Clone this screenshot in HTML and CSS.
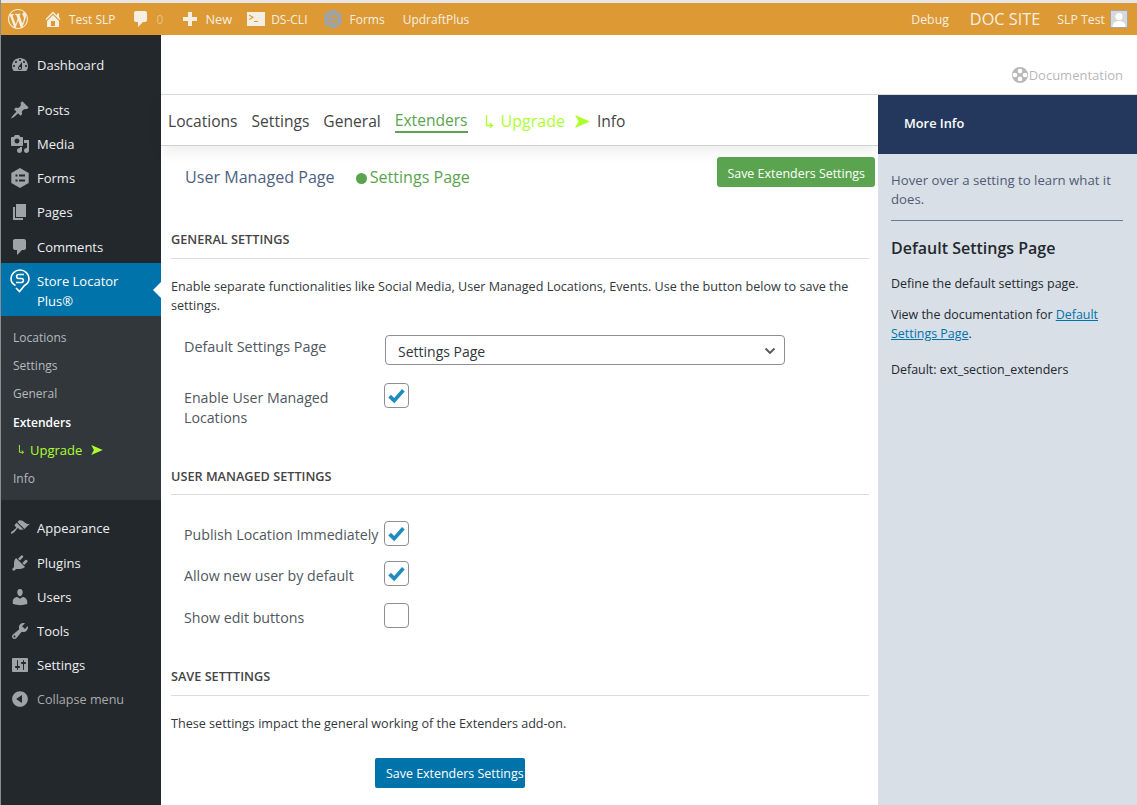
FILE: index.html
```html
<!DOCTYPE html>
<html lang="en">

<head>
  <meta charset="UTF-8">
  <meta name="viewport" content="width=device-width, initial-scale=1.0">
  <title>Extenders - Store Locator Plus</title>
  <link rel="stylesheet" href="styles.css">
</head>

<body>
  <svg class="sprite" width="0" height="0">
    <symbol id="i-wp" viewBox="0 0 20 20"><path d="M20 10c0-5.51-4.49-10-10-10C4.48 0 0 4.49 0 10c0 5.52 4.48 10 10 10 5.51 0 10-4.48 10-10zM7.78 15.37L4.37 6.22c.55-.02 1.17-.08 1.17-.08.5-.06.44-1.13-.06-1.11 0 0-1.45.11-2.37.11-.18 0-.37 0-.58-.01C4.12 2.69 6.87 1.11 10 1.11c2.33 0 4.45.87 6.05 2.34-.68-.11-1.65.39-1.65 1.58 0 .74.45 1.36.9 2.1.35.61.55 1.36.55 2.46 0 1.49-1.4 5-1.4 5l-3.03-8.37c.54-.02.82-.17.82-.17.5-.05.44-1.25-.06-1.22 0 0-1.44.12-2.38.12-.87 0-2.33-.12-2.33-.12-.5-.03-.56 1.2-.06 1.22l.92.08 1.26 3.41zM17.41 10c.24-.64.74-1.87.43-4.25.7 1.29 1.05 2.71 1.05 4.25 0 3.29-1.73 6.24-4.4 7.78.97-2.59 1.94-5.2 2.92-7.78zM6.1 18.09C3.12 16.65 1.11 13.53 1.11 10c0-1.3.23-2.48.72-3.59C3.25 10.3 4.67 14.2 6.1 18.09zm4.03-6.63l2.58 6.98c-.86.29-1.76.45-2.71.45-.79 0-1.57-.11-2.29-.33.81-2.38 1.62-4.74 2.42-7.1z"/></symbol>
    <symbol id="i-home" viewBox="0 0 20 20"><path d="M16 8.5l1.53 1.53-1.06 1.06L10 4.62l-6.47 6.47-1.06-1.06L10 2.5l4 4v-2h2v4zm-6-2.46l6 5.99V18H4v-5.97zM12 17v-5H8v5h4z"/></symbol>
    <symbol id="i-comment" viewBox="0 0 20 20"><path d="M5 2h9c1.1 0 2 .9 2 2v7c0 1.1-.9 2-2 2h-2l-5 5v-5H5c-1.1 0-2-.9-2-2V4c0-1.1.9-2 2-2z"/></symbol>
    <symbol id="i-plus" viewBox="0 0 20 20"><path d="M17 8v4h-5v5H8v-5H3V8h5V3h4v5h5z"/></symbol>
    <symbol id="i-term" viewBox="0 0 18 14"><path fill-rule="evenodd" d="M0 0h18v14H0zM2 2.5v1.2l3 1.6-3 1.6v1.2l4.600-2.400v-.8zM7 9v1h4V9z"/></symbol>
    <symbol id="i-forms" viewBox="0 0 20 20"><path fill-rule="evenodd" d="M10 0l8.700 5v10L10 20l-8.700-5V5zM5.500 6.500v2h2v-2zM9 6.500v2h6v-2zM5.500 11.500v2h2v-2zM9 11.500v2h6v-2z"/></symbol>
    <symbol id="i-dash" viewBox="0 0 20 20"><path d="M3.76 16h12.48c1.1-1.37 1.76-3.11 1.76-5 0-4.42-3.58-8-8-8s-8 3.58-8 8c0 1.89.66 3.63 1.76 5zM10 4c.55 0 1 .45 1 1s-.45 1-1 1-1-.45-1-1 .45-1 1-1zM6 6c.55 0 1 .45 1 1s-.45 1-1 1-1-.45-1-1 .45-1 1-1zm8 0c.55 0 1 .45 1 1s-.45 1-1 1-1-.45-1-1 .45-1 1-1zm-5.37 5.55L12 7v6c0 1.1-.9 2-2 2s-2-.9-2-2c0-.57.24-1.08.63-1.45zM4 10c.55 0 1 .45 1 1s-.45 1-1 1-1-.45-1-1 .45-1 1-1zm12 0c.55 0 1 .45 1 1s-.45 1-1 1-1-.45-1-1 .45-1 1-1zm-5 3c0-.55-.45-1-1-1s-1 .45-1 1 .45 1 1 1 1-.45 1-1z"/></symbol>
    <symbol id="i-pin" viewBox="0 0 20 20"><path d="M10.44 3.02l1.82-1.82 6.36 6.35-1.83 1.82c-1.05-.68-2.48-.57-3.41.36l-.75.75c-.92.93-1.04 2.35-.35 3.41l-1.83 1.82-2.41-2.41-2.8 2.79c-.42.42-3.38 2.71-3.8 2.29s1.86-3.39 2.28-3.81l2.79-2.79L4.1 9.36l1.83-1.82c1.05.69 2.48.57 3.4-.36l.75-.75c.93-.92 1.05-2.35.36-3.41z"/></symbol>
    <symbol id="i-media" viewBox="0 0 20 20"><path d="M13 11V4c0-.55-.45-1-1-1h-1.67L9 1H5L3.67 3H2c-.55 0-1 .45-1 1v7c0 .55.45 1 1 1h10c.55 0 1-.45 1-1zM7 4.5c1.38 0 2.5 1.12 2.5 2.5S8.38 9.5 7 9.5 4.5 8.38 4.5 7 5.62 4.5 7 4.5zM14 6h5v10.5c0 1.38-1.12 2.5-2.5 2.5S14 17.88 14 16.5s1.12-2.5 2.5-2.5c.17 0 .34.02.5.05V9h-3V6zm-4 8.05V13h2v3.5c0 1.38-1.12 2.5-2.5 2.5S7 17.88 7 16.5 8.12 14 9.5 14c.17 0 .34.02.5.05z"/></symbol>
    <symbol id="i-pages" viewBox="0 0 20 20"><path d="M6 15V2h10v13H6zm-1 1h8v2H3V5h2v11z"/></symbol>
    <symbol id="i-brush" viewBox="0 0 20 20"><path d="M14.48 11.06L7.41 3.99l1.5-1.5c.5-.56 2.3-.47 3.51.32 1.21.8 1.43 1.28 2.91 2.1 1.18.64 2.45 1.26 4.45.85zm-.71.71L6.7 4.7 4.93 6.47c-.39.39-.39 1.02 0 1.41l1.06 1.06c.39.39.39 1.03 0 1.42-.6.6-1.43 1.11-2.21 1.69-.35.26-.7.53-1.01.84C1.43 13.23.4 14.85 1.05 15.5c.65.65 2.27-.38 3.62-1.72.31-.31.58-.66.84-1.01.58-.78 1.09-1.61 1.69-2.21.39-.39 1.02-.39 1.41 0l1.06 1.06c.39.39 1.02.39 1.41 0z"/></symbol>
    <symbol id="i-plug" viewBox="0 0 20 20"><path d="M13.11 4.36L9.87 7.6 8 5.73l3.24-3.24c.35-.34 1.05-.2 1.56.32.52.51.66 1.21.31 1.55zm-8 1.77l.91-1.12 9.01 9.01-1.19.84c-.71.71-2.63 1.16-3.82 1.16H6.14L4.9 17.26c-.59.59-1.54.59-2.12 0-.59-.58-.59-1.53 0-2.12l1.24-1.24v-3.88c0-1.13.4-3.19 1.09-3.89zm7.26 3.97l3.24-3.24c.34-.35 1.04-.21 1.55.31.52.51.66 1.21.31 1.55l-3.24 3.25z"/></symbol>
    <symbol id="i-users" viewBox="0 0 20 20"><path d="M10 9.25c-2.27 0-2.73-3.44-2.73-3.44C7 4.02 7.82 2 9.97 2c2.16 0 2.98 2.02 2.71 3.81 0 0-.41 3.44-2.68 3.44zm0 2.57L12.72 10c2.39 0 4.52 2.33 4.52 4.53v2.49s-3.65 1.13-7.24 1.13c-3.65 0-7.24-1.13-7.24-1.13v-2.49c0-2.25 1.94-4.48 4.47-4.48z"/></symbol>
    <symbol id="i-tools" viewBox="0 0 20 20"><path d="M16.68 9.77c-1.34 1.34-3.3 1.67-4.95.99l-5.41 6.52c-.99.99-2.59.99-3.58 0s-.99-2.59 0-3.57l6.52-5.42c-.68-1.65-.35-3.61.99-4.95 1.28-1.28 3.12-1.62 4.72-1.06l-2.89 2.89 2.82 2.82 2.86-2.87c.53 1.58.18 3.39-1.08 4.65zM3.81 16.21c.4.39 1.04.39 1.43 0 .4-.4.4-1.04 0-1.43-.39-.4-1.03-.4-1.43 0-.39.39-.39 1.03 0 1.43z"/></symbol>
    <symbol id="i-sliders" viewBox="0 0 20 20"><path d="M18 16V4c0-.55-.45-1-1-1H3c-.55 0-1 .45-1 1v12c0 .55.45 1 1 1h14c.55 0 1-.45 1-1zM8 11h1c.55 0 1 .45 1 1s-.45 1-1 1H8v1.5c0 .28-.22.5-.5.5s-.5-.22-.5-.5V13H6c-.55 0-1-.45-1-1s.45-1 1-1h1V5.5c0-.28.22-.5.5-.5s.5.22.5.5V11zm5-2h-1c-.55 0-1-.45-1-1s.45-1 1-1h1V5.5c0-.28.22-.5.5-.5s.5.22.5.5V7h1c.55 0 1 .45 1 1s-.45 1-1 1h-1v5.5c0 .28-.22.5-.5.5s-.5-.22-.5-.5V9z"/></symbol>
    <symbol id="i-collapse" viewBox="0 0 20 20"><path d="M10 2.16c4.33 0 7.84 3.51 7.84 7.84s-3.51 7.84-7.84 7.84S2.16 14.33 2.16 10 5.71 2.16 10 2.16zm2 11.72V6.12L6.18 9.97z"/></symbol>
    <symbol id="i-buoy" viewBox="0 0 20 20"><path fill-rule="evenodd" d="M10 1a9 9 0 1 1 0 18 9 9 0 0 1 0-18zM10 3a2.600 2.600 0 1 0 0 5.200A2.600 2.600 0 0 0 10 3zM4.400 7.400a2.600 2.600 0 1 0 0 5.200 2.600 2.600 0 0 0 0-5.200zM15.600 7.400a2.600 2.600 0 1 0 0 5.200 2.600 2.600 0 0 0 0-5.200zM10 11.800a2.600 2.600 0 1 0 0 5.200 2.600 2.600 0 0 0 0-5.200z"/></symbol>
    <symbol id="i-send" viewBox="0 0 15 13"><path d="M0 0l15 6.500L0 13l3.500-6.500z"/></symbol>
    <symbol id="i-turn" viewBox="0 0 9 13"><path d="M1.500 0v10.500H7M4.800 8l2.700 2.500-2.700 2.500" fill="none" stroke="currentColor" stroke-width="1.300"/></symbol>
    <symbol id="i-tick" viewBox="0 0 20 20"><path d="M4 10.500l4 4 8-9" fill="none" stroke="#1e8cbe" stroke-width="3.200"/></symbol>
  </svg>

  <div class="adminbar">
    <div class="bar-left">
      <span class="bar-item bar-logo"><svg class="bar-icon"><use href="#i-wp"/></svg></span>
      <span class="bar-item"><svg class="bar-icon"><use href="#i-home"/></svg>Test SLP</span>
      <span class="bar-item bar-comments"><svg class="bar-icon"><use href="#i-comment"/></svg><span class="bar-zero">0</span></span>
      <span class="bar-item bar-new"><svg class="bar-icon"><use href="#i-plus"/></svg>New</span>
      <span class="bar-item"><svg class="bar-icon term"><use href="#i-term"/></svg>DS-CLI</span>
      <span class="bar-item bar-forms"><svg class="bar-icon forms"><use href="#i-forms"/></svg>Forms</span>
      <span class="bar-item bar-updraft">UpdraftPlus</span>
    </div>
    <div class="bar-right">
      <span class="bar-item">Debug</span>
      <span class="bar-item doc-site">DOC SITE</span>
      <span class="bar-item bar-user">SLP Test<span class="avatar"><svg viewBox="0 0 16 16"><circle cx="8" cy="5.500" r="3.500"/><path d="M1.500 16c0-4 3-6 6.500-6s6.500 2 6.500 6z"/></svg></span></span>
    </div>
  </div>

  <div class="wrap">
    <nav class="sidebar">
      <ul class="menu first">
        <li><svg class="menu-icon"><use href="#i-dash"/></svg>Dashboard</li>
      </ul>
      <ul class="menu second">
        <li><svg class="menu-icon"><use href="#i-pin"/></svg>Posts</li>
        <li><svg class="menu-icon"><use href="#i-media"/></svg>Media</li>
        <li><svg class="menu-icon"><use href="#i-forms"/></svg>Forms</li>
        <li><svg class="menu-icon"><use href="#i-pages"/></svg>Pages</li>
        <li><svg class="menu-icon"><use href="#i-comment"/></svg>Comments</li>
        <li class="current">
          <svg class="menu-icon slp-logo" viewBox="0 0 20 24"><path d="M5.500 16.500C2.500 15 1 12.500 1 9.800 1 5 5 1 10 1s9 4 9 8.800c0 2.700-1.500 5.200-4.500 6.700l-5 6-3.500-3.500" fill="none" stroke="#fff" stroke-width="1.600"/><path d="M14 5.500H8.500C6 5.500 6 9.500 8.500 9.500h3c2.500 0 2.500 4 0 4H6" fill="none" stroke="#fff" stroke-width="1.600"/></svg>
          <span>Store Locator<br>Plus®</span>
        </li>
      </ul>
      <ul class="submenu">
        <li>Locations</li>
        <li>Settings</li>
        <li>General</li>
        <li class="sub-active">Extenders</li>
        <li class="sub-upgrade"><svg class="sub-turn"><use href="#i-turn"/></svg>Upgrade<svg class="sub-send"><use href="#i-send"/></svg></li>
        <li>Info</li>
      </ul>
      <ul class="menu third">
        <li><svg class="menu-icon"><use href="#i-brush"/></svg>Appearance</li>
        <li><svg class="menu-icon"><use href="#i-plug"/></svg>Plugins</li>
        <li><svg class="menu-icon"><use href="#i-users"/></svg>Users</li>
        <li><svg class="menu-icon"><use href="#i-tools"/></svg>Tools</li>
        <li><svg class="menu-icon"><use href="#i-sliders"/></svg>Settings</li>
        <li class="collapse"><svg class="menu-icon"><use href="#i-collapse"/></svg>Collapse menu</li>
      </ul>
    </nav>

    <div class="page">
      <div class="page-head">
        <span class="doc-link"><svg class="doc-icon"><use href="#i-buoy"/></svg>Documentation</span>
      </div>
      <div class="page-body">
        <main class="content">
          <div class="tabs">
            <span class="tab">Locations</span>
            <span class="tab">Settings</span>
            <span class="tab">General</span>
            <span class="tab tab-active">Extenders</span>
            <svg class="tab-turn"><use href="#i-turn"/></svg>
            <span class="tab tab-upgrade">Upgrade</span>
            <svg class="tab-send"><use href="#i-send"/></svg>
            <span class="tab">Info</span>
          </div>

          <div class="subhead">
            <div class="subtabs">
              <span class="subtab">User Managed Page</span>
              <span class="subtab subtab-on"><span class="dot"></span>Settings Page</span>
            </div>
            <button class="btn btn-green">Save Extenders Settings</button>
          </div>

          <section class="group group-general">
            <h3>GENERAL SETTINGS</h3>
            <p class="intro">Enable separate functionalities like Social Media, User Managed Locations, Events. Use the button below to save the settings.</p>
            <div class="row row-select">
              <label>Default Settings Page</label>
              <div class="select"><span>Settings Page</span>
                <svg viewBox="0 0 12 8"><path d="M1.500 1.500L6 6l4.500-4.500" fill="none" stroke="#50575e" stroke-width="1.800"/></svg>
              </div>
            </div>
            <div class="row row-two">
              <label>Enable User Managed Locations</label>
              <span class="check"><svg><use href="#i-tick"/></svg></span>
            </div>
          </section>

          <section class="group group-user">
            <h3>USER MANAGED SETTINGS</h3>
            <div class="row row-one">
              <label>Publish Location Immediately</label>
              <span class="check"><svg><use href="#i-tick"/></svg></span>
            </div>
            <div class="row row-mid">
              <label>Allow new user by default</label>
              <span class="check"><svg><use href="#i-tick"/></svg></span>
            </div>
            <div class="row row-last">
              <label>Show edit buttons</label>
              <span class="check"></span>
            </div>
          </section>

          <section class="group group-save">
            <h3>SAVE SETTTINGS</h3>
            <p class="intro">These settings impact the general working of the Extenders add-on.</p>
            <div class="save-row"><button class="btn btn-blue">Save Extenders Settings</button></div>
          </section>
        </main>

        <aside class="info">
          <div class="info-head">More Info</div>
          <div class="info-body">
            <p class="hover-note">Hover over a setting to learn what it does.</p>
            <h2>Default Settings Page</h2>
            <p>Define the default settings page.</p>
            <p>View the documentation for <a href="#">Default Settings Page</a>.</p>
            <p class="default-val">Default: ext_section_extenders</p>
          </div>
        </aside>
      </div>
    </div>
  </div>
</body>

</html>
```

FILE: styles.css
```css
* {
  box-sizing: border-box;
}

html,
body {
  margin: 0;
  height: 805px;
  overflow: hidden;
}

body {
  padding-top: 3px;
  border-left: 1px solid #8a8d90;
  background: #fff;
  font-family: "Open Sans", "Noto Sans", sans-serif;
  font-size: 13px;
  color: #32373c;
}

.sprite {
  position: absolute;
}

/* top bar */
.adminbar {
  display: flex;
  justify-content: space-between;
  height: 32px;
  background-color: #dd9933;
  color: #f5efe3;
  font-size: 12px;
  box-shadow: 0 -3px 0 #e6e6e6;
}

.bar-left,
.bar-right {
  display: flex;
  align-items: center;
}

.bar-left .bar-item {
  margin-right: 15px;
}

.bar-item {
  display: flex;
  align-items: center;
  white-space: nowrap;
}

.bar-icon {
  width: 20px;
  height: 20px;
  margin-right: 6px;
  fill: #f5efe3;
}

.bar-logo {
  margin-left: 7px;
}

.bar-logo .bar-icon {
  margin-right: 0;
}

.bar-left .bar-comments {
  margin-right: 17px;
}

.bar-new {
  font-size: 12.800px;
}

.bar-new .bar-icon {
  margin-right: 5px;
}

.bar-zero {
  color: #e8c17f;
}

.term {
  width: 18px;
  height: 14px;
}

.forms {
  fill: #9ea3a8;
}

.bar-forms {
  margin-left: 1px;
}

.bar-left .bar-updraft {
  margin-left: 3px;
}

.bar-right {
  padding-right: 9px;
  font-size: 12.300px;
}

.doc-site {
  margin-left: 21px;
  font-size: 16.300px;
}

.bar-user {
  margin-left: 17px;
}

.avatar {
  display: block;
  width: 18px;
  height: 18px;
  margin-left: 5px;
  background: #d8d8d8;
  border: 1px solid #a5a5a5;
}

.avatar svg {
  display: block;
  fill: #fff;
}

/* layout */
.wrap {
  display: flex;
  height: 770px;
}

.sidebar {
  flex: 0 0 160px;
  background-color: #23282d;
  color: #eee;
}

.menu,
.submenu {
  margin: 0;
  padding: 0;
  list-style: none;
}

.menu li {
  display: flex;
  align-items: center;
  height: 34.100px;
  padding-left: 9px;
}

.menu-icon {
  width: 20px;
  height: 20px;
  margin-right: 7px;
  flex: none;
  fill: #9ea3a8;
}

.first {
  padding-top: 13px;
}

.second {
  padding-top: 11px;
}

.menu .current {
  position: relative;
  align-items: flex-start;
  height: 53px;
  margin-top: -0.5px;
  padding-top: 8px;
  background-color: #0073aa;
  color: #fff;
  line-height: 20px;
}

.current::after {
  content: "";
  position: absolute;
  right: 0;
  top: 19px;
  border: 8px solid transparent;
  border-right-color: #fff;
}

.slp-logo {
  width: 20px;
  height: 24px;
  margin-top: -2px;
}

.submenu {
  height: 184px;
  padding-top: 8px;
  background-color: #32373c;
  color: #b4b9be;
  font-size: 12px;
}

.submenu li {
  height: 28.200px;
  line-height: 28px;
  padding-left: 12px;
}

.submenu .sub-active {
  color: #fff;
  font-weight: 600;
}

.submenu .sub-upgrade {
  display: flex;
  align-items: center;
  padding: 0 0 2px 17px;
  color: #adff2f;
  font-size: 13px;
}

.sub-turn {
  width: 7px;
  height: 9px;
  margin-right: 5px;
}

.sub-send {
  width: 12px;
  height: 10px;
  margin-left: 9px;
  fill: #adff2f;
}

.third {
  padding-top: 11.300px;
}

.third li {
  height: 34.200px;
}

.collapse {
  color: #aaa;
  font-size: 12.600px;
}

/* page */
.page {
  flex: 1;
  display: flex;
  flex-direction: column;
}

.page-head {
  flex: none;
  display: flex;
  align-items: center;
  justify-content: flex-end;
  height: 60px;
  padding: 20px 14px 0 0;
  border-bottom: 1px solid #dcdcdc;
  color: #b8b8b8;
}

.doc-link {
  display: flex;
  align-items: center;
}

.doc-icon {
  width: 18px;
  height: 18px;
  fill: #b8b8b8;
}

.page-body {
  flex: 1;
  display: flex;
}

.content {
  flex: 1;
}

.tabs {
  display: flex;
  align-items: center;
  height: 51px;
  padding: 2px 0 0 7px;
  border-bottom: 1px solid #d0d0d0;
  box-shadow: 0 6px 14px rgba(0, 0, 0, 0.07);
  font-size: 15.600px;
  color: #444;
}

.tab {
  margin-right: 14px;
}

.tab-active {
  margin-right: 17px;
  color: #5ba44f;
  border-bottom: 2px solid #5ba44f;
}

.tab-turn {
  width: 9px;
  height: 13px;
  margin-right: 7px;
  color: #adff2f;
}

.tab-upgrade {
  margin-right: 10px;
  font-size: 16px;
  color: #adff2f;
}

.tab-send {
  width: 15px;
  height: 13px;
  margin-right: 7px;
  fill: #adff2f;
}

.subhead {
  display: flex;
  justify-content: space-between;
  height: 42px;
  padding: 11px 3px 0 24px;
}

.subtabs {
  display: flex;
  padding-top: 9px;
  font-size: 16.100px;
  color: #4d6280;
}

.subtab {
  margin-right: 21px;
}

.subtab-on {
  color: #5ba44f;
}

.dot {
  display: inline-block;
  width: 11px;
  height: 11px;
  margin-right: 3px;
  vertical-align: -1px;
  border-radius: 50%;
  background: #5ba44f;
}

.btn {
  height: 30px;
  padding: 2px 10px 0;
  border: 0;
  border-radius: 3px;
  color: #fff;
  font-family: inherit;
  font-size: 12.450px;
  white-space: nowrap;
}

.btn-green {
  background: #5ba44f;
}

.btn-blue {
  width: 150px;
  padding: 0 0 0 11px;
  background: #0073aa;
  border-radius: 2px;
  text-align: left;
}

.group {
  margin: 0 9px 0 10px;
}

.group h3 {
  margin: 0;
  padding: 0 0 10px;
  border-bottom: 1px solid #dcdcdc;
  font-size: 12.700px;
  font-weight: 600;
  line-height: 18px;
  color: #444;
}

.group-general {
  padding-top: 42px;
}

.group-user {
  padding-top: 16px;
}

.group-user h3 {
  padding-bottom: 9px;
}

.group-save {
  padding-top: 23px;
}

.intro {
  margin: 18px 0 0;
  font-size: 12.600px;
  line-height: 19px;
  color: #32373c;
}

.row {
  display: flex;
  padding-left: 13px;
  color: #50575e;
}

.row label {
  flex: 0 0 200px;
  padding-top: 5px;
  font-size: 14.200px;
  line-height: 20px;
}

.row-select {
  height: 48px;
  margin-top: 20px;
}

.row-select label {
  padding-top: 2px;
  font-size: 14.400px;
}

.row-two {
  height: 68px;
}

.row-one {
  height: 40px;
  margin-top: 26px;
}

.row-one label {
  padding-top: 4px;
}

.row-mid {
  height: 42px;
}

.row-last {
  height: 41px;
}

.select {
  display: flex;
  align-items: center;
  justify-content: space-between;
  width: 400px;
  height: 30px;
  margin-left: 1px;
  padding: 2px 8px 0 12px;
  border: 1px solid #8c8f94;
  border-radius: 4px;
  font-size: 14px;
  color: #32373c;
}

.select svg {
  width: 12px;
  height: 8px;
}

.check {
  display: block;
  width: 25px;
  height: 25px;
  border: 1px solid #8c8f94;
  border-radius: 4px;
}

.check svg {
  display: block;
  width: 23px;
  height: 23px;
}

.save-row {
  padding: 25px 0 0 204px;
}

/* side panel */
.info {
  flex: 0 0 259px;
  background-color: #d9dfe7;
  font-size: 12.450px;
  color: #23282d;
}

.info-head {
  height: 59px;
  padding: 0 26px;
  background-color: #24385e;
  color: #fff;
  font-size: 12.800px;
  font-weight: 600;
  line-height: 56px;
}

.info-body {
  padding: 0 14px 0 13px;
}

.info-body p {
  margin: 0 0 12px;
  line-height: 19px;
}

.info-body .hover-note {
  margin: 0;
  padding: 17px 0 11px;
  border-bottom: 1px solid #6a7b95;
  font-size: 13.200px;
  color: #505c74;
}

.info-body h2 {
  margin: 15px 0 14px;
  font-size: 16px;
  font-weight: 600;
  line-height: 24px;
}

.info-body a {
  color: #0073aa;
}

.info-body .default-val {
  margin-top: 17px;
}
```
